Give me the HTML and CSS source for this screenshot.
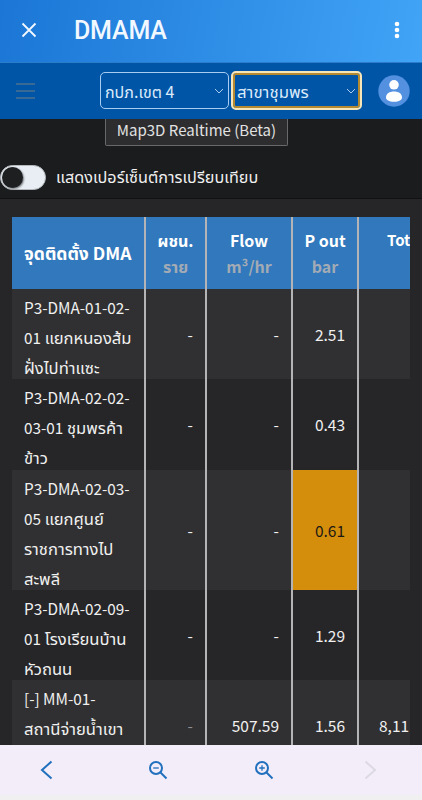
FILE: index.html
```html
<!DOCTYPE html>
<html lang="th">
<head>
<meta charset="UTF-8">
<meta name="viewport" content="width=device-width, initial-scale=1.0">
<title>DMAMA</title>
<link rel="stylesheet" href="styles.css">
</head>
<body>
  <header class="appbar">
    <svg class="close" viewBox="0 0 16 16"><path d="M1.5 1.5l13 13M14.5 1.5l-13 13"/></svg>
    <h1>DMAMA</h1>
    <svg class="more" viewBox="0 0 6 18"><circle cx="3" cy="3" r="2.3"/><circle cx="3" cy="9" r="2.3"/><circle cx="3" cy="15" r="2.3"/></svg>
  </header>

  <nav class="navbar">
    <div class="menu"><span></span><span></span><span></span></div>
    <div class="select zone">
      <span class="label">กปภ.เขต 4</span>
      <svg class="caret" viewBox="0 0 10 6"><path d="M1 1l4 4 4-4"/></svg>
    </div>
    <div class="select branch">
      <span class="label">สาขาชุมพร</span>
      <svg class="caret" viewBox="0 0 10 6"><path d="M1 1l4 4 4-4"/></svg>
    </div>
    <svg class="avatar" viewBox="0 0 32 32"><circle class="disc" cx="16" cy="16" r="15.7"/><circle cx="16" cy="9.8" r="4.8"/><path d="M8 22.5c0-4 3.500-6 8-6s8 2 8 6c0 2.500-3 4.300-8 4.300s-8-1.800-8-4.300z"/></svg>
  </nav>

  <main class="content">
    <div class="toolbar">
      <button class="map-btn">Map3D Realtime (Beta)</button>
      <div class="compare">
        <span class="switch"></span>
        <span class="label">แสดงเปอร์เซ็นต์การเปรียบเทียบ</span>
      </div>
    </div>

    <div class="table-box">
      <table>
        <colgroup><col class="c-name"><col class="c-user"><col class="c-flow"><col class="c-pout"><col class="c-total"></colgroup>
        <thead>
          <tr>
            <th class="name">จุดติดตั้ง DMA</th>
            <th>ผชน.<small>ราย</small></th>
            <th>Flow<small>m³/hr</small></th>
            <th>P out<small>bar</small></th>
            <th>Tot</th>
          </tr>
        </thead>
        <tbody>
          <tr>
            <td class="name"><p><span>P3-DMA-01-02-</span><br><span>01</span> แยกหนองส้ม<br>ฝั่งไปท่าแซะ</p></td>
            <td>-</td><td>-</td><td>2.51</td><td></td>
          </tr>
          <tr>
            <td class="name"><p><span>P3-DMA-02-02-</span><br><span>03-01</span> ชุมพรค้า<br>ข้าว</p></td>
            <td>-</td><td>-</td><td>0.43</td><td></td>
          </tr>
          <tr>
            <td class="name"><p><span>P3-DMA-02-03-</span><br><span>05</span> แยกศูนย์<br>ราชการทางไป<br>สะพลี</p></td>
            <td>-</td><td>-</td><td class="warn">0.61</td><td></td>
          </tr>
          <tr>
            <td class="name"><p><span>P3-DMA-02-09-</span><br><span>01</span> โรงเรียนบ้าน<br>หัวถนน</p></td>
            <td>-</td><td>-</td><td>1.29</td><td></td>
          </tr>
          <tr>
            <td class="name"><p><span>[-] MM-01-</span><br>สถานีจ่ายน้ำเขา<br>&nbsp;</p></td>
            <td class="dim">-</td><td>507.59</td><td>1.56</td><td class="total">8,11</td>
          </tr>
        </tbody>
      </table>
    </div>
  </main>

  <footer class="bottombar">
    <svg class="nav-arrow" viewBox="0 0 14 20"><path d="M11.500 1.500L2 10l9.500 8.500"/></svg>
    <svg class="zoom" viewBox="0 0 20 20"><circle cx="8" cy="8" r="6"/><path d="M12.500 12.500l6 6"/><path class="sign" d="M5.200 8h5.600"/></svg>
    <svg class="zoom" viewBox="0 0 20 20"><circle cx="8" cy="8" r="6"/><path d="M12.500 12.500l6 6"/><path class="sign" d="M5.200 8h5.600M8 5.200v5.600"/></svg>
    <svg class="nav-arrow off" viewBox="0 0 14 20"><path d="M2.500 1.500L12 10l-9.500 8.500"/></svg>
  </footer>
</body>
</html>
```
FILE: styles.css
```css
* {
  box-sizing: border-box;
}
body {
  margin: 0;
  height: 800px;
  display: flex;
  flex-direction: column;
  overflow: hidden;
  background: #262628;
  color: #f0f0f0;
  font-family: "Noto Sans CJK JP", "Noto Sans Thai", sans-serif;
  font-size: 16px;
}
svg {
  display: block;
  fill: none;
  flex: none;
}
.appbar {
  height: 63px;
  flex: none;
  display: flex;
  align-items: center;
  padding: 0 22px 2px 21px;
  background: linear-gradient(100deg, #1b76d5, #41a4f6);
  border-bottom: 1px solid #2b7dcc;
}
.close {
  width: 16px;
  height: 16px;
  stroke: #f2f8ff;
  stroke-width: 1.8;
}
.appbar h1 {
  flex: 1;
  margin: 0 0 0 37px;
  color: #f2f8ff;
  font-family: Roboto, sans-serif;
  font-size: 25px;
  font-weight: 500;
  letter-spacing: -0.2px;
}
.more {
  width: 6px;
  height: 18px;
  fill: #fff;
}
.navbar {
  height: 56px;
  flex: none;
  display: flex;
  align-items: center;
  padding: 0 12px 1px 16px;
  background: #0055a7;
}
.menu {
  width: 19px;
  margin-right: 65px;
  display: flex;
  flex-direction: column;
  gap: 5px;
}
.menu span {
  height: 2px;
  background: #386a95;
}
.select {
  display: flex;
  align-items: center;
  justify-content: space-between;
  padding: 0 4px;
  border: 1px solid #a9cdf0;
  border-radius: 5px;
  color: #dcebfa;
  font-size: 16.8px;
  line-height: 30px;
  white-space: nowrap;
}
.zone {
  width: 129px;
  height: 37px;
  font-size: 16px;
}
.branch {
  width: 131px;
  height: 39px;
  margin: 0 16px 0 2px;
  border: 2px solid #f8e6b8;
  box-shadow: inset 0 0 0 2px #b38a31;
}
.caret {
  width: 10px;
  height: 6px;
  stroke: #a9cdf0;
}
.avatar {
  width: 32px;
  height: 32px;
  fill: #fff;
}
.disc {
  fill: #5390e0;
}
.content {
  flex: 1;
  min-height: 0;
  overflow: hidden;
}
.toolbar {
  height: 80px;
  background: #1b1c1e;
  border-bottom: 1px solid #111;
}
.map-btn {
  display: block;
  width: 183px;
  height: 27px;
  margin-left: 105px;
  padding: 0 0 5px;
  border: 1px solid #68686a;
  border-top: 0;
  border-radius: 0 0 2px 2px;
  background: #2d2d2f;
  color: #e2e2e2;
  font: 15px/21px "Noto Sans CJK JP", sans-serif;
}
.compare {
  display: flex;
  align-items: center;
  gap: 10px;
  height: 26px;
  margin-top: 18px;
  font-size: 16.2px;
  white-space: nowrap;
}
.switch {
  width: 46px;
  height: 25px;
  padding: 1px;
  border: 1px solid #b5b9bd;
  border-radius: 13px;
  background: #e9eef5;
}
.switch::before {
  content: "";
  display: block;
  width: 21px;
  height: 21px;
  border-radius: 50%;
  background: #1e1f21;
  box-shadow: 1px 1px 2px #6f7276;
}
.table-box {
  width: 398px;
  margin: 18px 0 0 12px;
  overflow: hidden;
}
table {
  width: 441px;
  table-layout: fixed;
  border-collapse: separate;
  border-spacing: 0;
}
.c-name {
  width: 134px;
}
.c-user {
  width: 61px;
}
.c-flow {
  width: 86px;
}
.c-pout {
  width: 66px;
}
th {
  height: 72px;
  padding: 0;
  background: #3178bc;
  color: #fff;
  font-weight: 700;
  line-height: 26px;
  white-space: nowrap;
}
th small {
  display: block;
  color: #a2abb5;
  font-size: 16px;
}
td {
  height: 90.3px;
  padding: 0 12px;
  font-size: 15.5px;
  line-height: 30px;
  text-align: right;
}
th:not(:last-child),
td:not(:last-child) {
  border-right: 2px solid #b4b4b6;
}
th:last-child {
  padding: 0 0 26px 28px;
  font-size: 15px;
  text-align: left;
}
.name {
  padding-left: 12px;
  padding-right: 0;
  text-align: left;
  white-space: nowrap;
}
th.name {
  font-size: 17.5px;
}
.name p {
  margin: 3px 0 -3px;
  font-size: 16.6px;
}
.name p span {
  font-size: 15.3px;
}
tbody tr:nth-child(odd) {
  background: #303032;
}
.warn {
  background: #d58e0c;
  color: #1d1a14;
}
.dim {
  color: #8f8f91;
}
.total {
  padding-left: 20px;
  text-align: left;
}
.bottombar {
  height: 55px;
  flex: none;
  display: flex;
  align-items: center;
  padding: 0 46px 0 40px;
  background: #f3edfa;
  border-bottom: 5px solid #f0f0f0;
}
.bottombar svg {
  stroke: #2070bd;
  stroke-width: 2;
}
.nav-arrow {
  width: 14px;
  height: 20px;
}
.zoom {
  width: 20px;
  height: 20px;
  margin-left: 86px;
}
.zoom + .nav-arrow {
  margin-left: 89px;
}
.nav-arrow + .zoom {
  margin-left: 94px;
}
.bottombar .sign {
  stroke-width: 1.3;
}
.bottombar .off {
  stroke: #dcd9e2;
}
```
